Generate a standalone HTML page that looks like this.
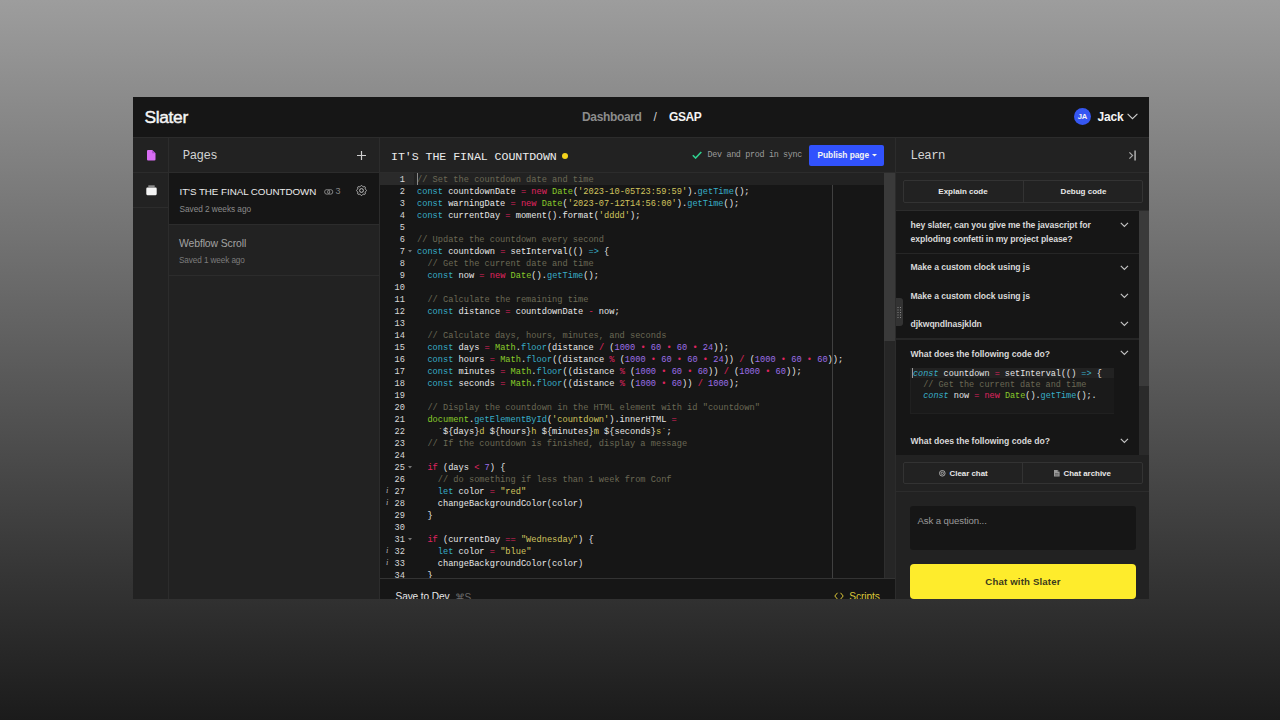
<!DOCTYPE html>
<html><head><meta charset="utf-8">
<style>
*{box-sizing:border-box;margin:0;padding:0}
html,body{width:1280px;height:720px;overflow:hidden}
body{background:linear-gradient(to bottom,#9d9d9d 0%,#1b1b1b 100%);font-family:"Liberation Sans",sans-serif;position:relative}
.a{position:absolute}
.t{white-space:pre;line-height:1}
#win{left:133px;top:97px;width:1016px;height:502px;background:#222;overflow:hidden}
#code{left:284px;font-family:"Liberation Mono",monospace;font-size:8.667px;line-height:12px;color:#e8e8e8;white-space:pre}
.ln{left:247px;width:25px;text-align:right;font-family:"Liberation Mono",monospace;font-size:8.667px;line-height:12px;color:#d8d8d8;white-space:pre}
.c{color:#6b6955}
.k{color:#38aec8}
.it{font-style:italic}
.o{color:#e02460}
.g{color:#88cb2a}
.s{color:#d2c45e}
.f{color:#38aec8}
.n{color:#9d6fe8}
</style></head><body>
<div id="win" class="a">
<div class="a" style="left:0px;top:0px;width:1016px;height:40px;background:#161616;"></div>
<div class="a" style="left:0px;top:40px;width:1016px;height:1px;background:#2c2c2c;"></div>
<div class="a t" style="left:11.50px;top:12.26px;font-family:'Liberation Sans',sans-serif;font-size:17.4px;color:#f4f4f4;letter-spacing:-0.35px;-webkit-text-stroke:0.45px #f4f4f4;">Slater</div>
<div class="a t" style="left:449.00px;top:13.84px;font-family:'Liberation Sans',sans-serif;font-size:12px;color:#8c8c8c;font-weight:bold;letter-spacing:-0.35px;">Dashboard</div>
<div class="a t" style="left:520.50px;top:13.84px;font-family:'Liberation Sans',sans-serif;font-size:12px;color:#cfcfcf;">/</div>
<div class="a t" style="left:536.00px;top:13.84px;font-family:'Liberation Sans',sans-serif;font-size:12px;color:#f4f4f4;font-weight:bold;letter-spacing:-0.45px;">GSAP</div>
<div class="a" style="left:941px;top:11px;width:17px;height:17px;background:#3657f2;border-radius:50%;"></div>
<div class="a t" style="left:941.00px;top:16.06px;font-family:'Liberation Sans',sans-serif;font-size:7.6px;color:#f4f4f4;font-weight:bold;width:17px;text-align:center;">JA</div>
<div class="a t" style="left:964.50px;top:13.84px;font-family:'Liberation Sans',sans-serif;font-size:12px;color:#f4f4f4;font-weight:bold;letter-spacing:-0.15px;">Jack</div>
<svg class="a" style="left:994px;top:16px" width="11" height="7" viewBox="0 0 11 7"><path d="M0.6 0.8 L5.5 5.7 L10.4 0.8" fill="none" stroke="#d0d0d0" stroke-width="1.05"/></svg>
<div class="a" style="left:35px;top:41px;width:1px;height:461px;background:#2c2c2c;"></div>
<div class="a" style="left:0px;top:75px;width:35px;height:1px;background:#2c2c2c;"></div>
<div class="a" style="left:0px;top:110px;width:35px;height:1px;background:#2c2c2c;"></div>
<svg class="a" style="left:14px;top:53px" width="8.5" height="10.5" viewBox="0 0 8.5 10.5"><path d="M1.1 0 H5.2 L8.5 3.3 V9.4 Q8.5 10.5 7.4 10.5 H1.1 Q0 10.5 0 9.4 V1.1 Q0 0 1.1 0Z" fill="#d86df3"/><path d="M5.2 0 V3.3 H8.5" fill="#a94fc8"/></svg>
<svg class="a" style="left:12.5px;top:88px" width="11" height="10.5" viewBox="0 0 11 10.5"><path d="M2.3 0.3 H8.7 V2.3 H2.3Z" fill="#8a8a8a"/><rect x="0.3" y="2.6" width="10.4" height="7.6" rx="1.1" fill="#f4f4f4"/></svg>
<div class="a t" style="left:49.80px;top:52.58px;font-family:'Liberation Mono',monospace;font-size:12.3px;color:#d2d2d2;letter-spacing:-0.5px;">Pages</div>
<svg class="a" style="left:223px;top:53px" width="11" height="11" viewBox="0 0 11 11"><path d="M5.5 1V10M1 5.5H10" stroke="#cfcfcf" stroke-width="1.2"/></svg>
<div class="a" style="left:36px;top:75px;width:210px;height:1px;background:#2c2c2c;"></div>
<div class="a" style="left:36px;top:76px;width:210px;height:51px;background:#161616;"></div>
<div class="a t" style="left:46.50px;top:89.70px;font-family:'Liberation Sans',sans-serif;font-size:9.8px;color:#ececec;letter-spacing:-0.05px;">IT'S THE FINAL COUNTDOWN</div>
<svg class="a" style="left:191px;top:92px" width="10" height="6" viewBox="0 0 10 6"><rect x="0.6" y="0.6" width="5.2" height="4.6" rx="2.3" fill="none" stroke="#858585" stroke-width="1"/><rect x="3.6" y="0.6" width="5.2" height="4.6" rx="2.3" fill="none" stroke="#858585" stroke-width="1"/></svg>
<div class="a t" style="left:202.60px;top:89.78px;font-family:'Liberation Sans',sans-serif;font-size:9px;color:#858585;">3</div>
<svg class="a" style="left:222.5px;top:88px" width="11" height="11" viewBox="0 0 11 11"><path d="M5.50 0.40 L5.70 0.43 L5.89 0.52 L6.07 0.66 L6.24 0.84 L6.39 1.04 L6.52 1.24 L6.65 1.43 L6.77 1.60 L6.89 1.72 L7.03 1.80 L7.19 1.84 L7.36 1.84 L7.57 1.81 L7.79 1.77 L8.03 1.72 L8.27 1.68 L8.52 1.67 L8.74 1.70 L8.94 1.77 L9.11 1.89 L9.23 2.06 L9.30 2.26 L9.33 2.48 L9.32 2.73 L9.28 2.97 L9.23 3.21 L9.19 3.43 L9.16 3.64 L9.16 3.81 L9.20 3.97 L9.28 4.11 L9.40 4.23 L9.57 4.35 L9.76 4.48 L9.96 4.61 L10.16 4.76 L10.34 4.93 L10.48 5.11 L10.57 5.30 L10.60 5.50 L10.57 5.70 L10.48 5.89 L10.34 6.07 L10.16 6.24 L9.96 6.39 L9.76 6.52 L9.57 6.65 L9.40 6.77 L9.28 6.89 L9.20 7.03 L9.16 7.19 L9.16 7.36 L9.19 7.57 L9.23 7.79 L9.28 8.03 L9.32 8.27 L9.33 8.52 L9.30 8.74 L9.23 8.94 L9.11 9.11 L8.94 9.23 L8.74 9.30 L8.52 9.33 L8.27 9.32 L8.03 9.28 L7.79 9.23 L7.57 9.19 L7.36 9.16 L7.19 9.16 L7.03 9.20 L6.89 9.28 L6.77 9.40 L6.65 9.57 L6.52 9.76 L6.39 9.96 L6.24 10.16 L6.07 10.34 L5.89 10.48 L5.70 10.57 L5.50 10.60 L5.30 10.57 L5.11 10.48 L4.93 10.34 L4.76 10.16 L4.61 9.96 L4.48 9.76 L4.35 9.57 L4.23 9.40 L4.11 9.28 L3.97 9.20 L3.81 9.16 L3.64 9.16 L3.43 9.19 L3.21 9.23 L2.97 9.28 L2.73 9.32 L2.48 9.33 L2.26 9.30 L2.06 9.23 L1.89 9.11 L1.77 8.94 L1.70 8.74 L1.67 8.52 L1.68 8.27 L1.72 8.03 L1.77 7.79 L1.81 7.57 L1.84 7.36 L1.84 7.19 L1.80 7.03 L1.72 6.89 L1.60 6.77 L1.43 6.65 L1.24 6.52 L1.04 6.39 L0.84 6.24 L0.66 6.07 L0.52 5.89 L0.43 5.70 L0.40 5.50 L0.43 5.30 L0.52 5.11 L0.66 4.93 L0.84 4.76 L1.04 4.61 L1.24 4.48 L1.43 4.35 L1.60 4.23 L1.72 4.11 L1.80 3.97 L1.84 3.81 L1.84 3.64 L1.81 3.43 L1.77 3.21 L1.72 2.97 L1.68 2.73 L1.67 2.48 L1.70 2.26 L1.77 2.06 L1.89 1.89 L2.06 1.77 L2.26 1.70 L2.48 1.67 L2.73 1.68 L2.97 1.72 L3.21 1.77 L3.43 1.81 L3.64 1.84 L3.81 1.84 L3.97 1.80 L4.11 1.72 L4.23 1.60 L4.35 1.43 L4.48 1.24 L4.61 1.04 L4.76 0.84 L4.93 0.66 L5.11 0.52 L5.30 0.43 L5.50 0.40Z" fill="none" stroke="#c8c8c8" stroke-width="0.95"/><circle cx="5.5" cy="5.5" r="1.9" fill="none" stroke="#c8c8c8" stroke-width="0.95"/></svg>
<div class="a t" style="left:46.50px;top:107.97px;font-family:'Liberation Sans',sans-serif;font-size:8.3px;color:#8a8a8a;letter-spacing:-0.05px;">Saved 2 weeks ago</div>
<div class="a" style="left:36px;top:127px;width:210px;height:1px;background:#2c2c2c;"></div>
<div class="a t" style="left:46.00px;top:142.19px;font-family:'Liberation Sans',sans-serif;font-size:10.4px;color:#a3a3a3;letter-spacing:-0.1px;">Webflow Scroll</div>
<div class="a t" style="left:46.00px;top:160.05px;font-family:'Liberation Sans',sans-serif;font-size:8.2px;color:#7c7c7c;letter-spacing:-0.1px;">Saved 1 week ago</div>
<div class="a" style="left:36px;top:178px;width:210px;height:1px;background:#2c2c2c;"></div>
<div class="a" style="left:246px;top:41px;width:1px;height:461px;background:#2c2c2c;"></div>
<div class="a t" style="left:258.00px;top:54.11px;font-family:'Liberation Mono',monospace;font-size:11.6px;color:#ececec;letter-spacing:-0.05px;">IT'S THE FINAL COUNTDOWN</div>
<div class="a" style="left:429px;top:56px;width:6px;height:6px;background:#f5d31c;border-radius:50%;"></div>
<svg class="a" style="left:559px;top:54px" width="10" height="8" viewBox="0 0 10 8"><path d="M0.8 4.2 L3.6 7 L9.3 1" fill="none" stroke="#2fd08f" stroke-width="1.6"/></svg>
<div class="a t" style="left:574.50px;top:54.37px;font-family:'Liberation Mono',monospace;font-size:8.4px;color:#9c9c9c;letter-spacing:-0.3px;">Dev and prod in sync</div>
<div class="a" style="left:676px;top:48px;width:75px;height:21px;background:#3152fd;border-radius:2px;"></div>
<div class="a t" style="left:684.50px;top:53.89px;font-family:'Liberation Sans',sans-serif;font-size:8.4px;color:#f4f4f4;font-weight:bold;letter-spacing:-0.05px;">Publish page</div>
<svg class="a" style="left:739px;top:57px" width="5" height="3" viewBox="0 0 5 3"><path d="M0 0H5L2.5 2.6Z" fill="#f4f4f4"/></svg>
<div class="a" style="left:247px;top:75px;width:516px;height:1px;background:#2c2c2c;"></div>
<div class="a" style="left:247px;top:76px;width:504px;height:406px;background:#161616;"></div>
<div class="a" style="left:247px;top:76px;width:504px;height:12px;background:#222222;"></div>
<div class="a" style="left:247px;top:76px;width:34px;height:12px;background:#2a2a2a;"></div>
<div class="a" style="left:699px;top:88px;width:1px;height:394px;background:#404040;"></div>
<div class="a" style="left:751px;top:76px;width:12px;height:406px;background:#262626;"></div>
<div class="a" style="left:751px;top:76px;width:12px;height:168px;background:#3a3a3a;"></div>
<div class="a" style="left:751px;top:244px;width:1px;height:238px;background:#2e2e2e;"></div>
<div class="a ln" style="top:77px"><div>1</div><div>2</div><div>3</div><div>4</div><div>5</div><div>6</div><div>7</div><div>8</div><div>9</div><div>10</div><div>11</div><div>12</div><div>13</div><div>14</div><div>15</div><div>16</div><div>17</div><div>18</div><div>19</div><div>20</div><div>21</div><div>22</div><div>23</div><div>24</div><div>25</div><div>26</div><div>27</div><div>28</div><div>29</div><div>30</div><div>31</div><div>32</div><div>33</div><div>34</div></div>
<div class="a" id="code" style="top:77px"><div><span class="c">// Set the countdown date and time</span></div><div><span class="k">const</span> countdownDate <span class="o">=</span> <span class="o">new</span> <span class="g">Date</span>(<span class="s">'2023-10-05T23:59:59'</span>).<span class="f">getTime</span>();</div><div><span class="k">const</span> warningDate <span class="o">=</span> <span class="o">new</span> <span class="g">Date</span>(<span class="s">'2023-07-12T14:56:00'</span>).<span class="f">getTime</span>();</div><div><span class="k">const</span> currentDay <span class="o">=</span> moment().format(<span class="s">'dddd'</span>);</div><div> </div><div><span class="c">// Update the countdown every second</span></div><div><span class="k">const</span> countdown <span class="o">=</span> setInterval(() <span class="f">=&gt;</span> {</div><div>  <span class="c">// Get the current date and time</span></div><div>  <span class="k">const</span> now <span class="o">=</span> <span class="o">new</span> <span class="g">Date</span>().<span class="f">getTime</span>();</div><div> </div><div>  <span class="c">// Calculate the remaining time</span></div><div>  <span class="k">const</span> distance <span class="o">=</span> countdownDate <span class="o">-</span> now;</div><div> </div><div>  <span class="c">// Calculate days, hours, minutes, and seconds</span></div><div>  <span class="k">const</span> days <span class="o">=</span> <span class="g">Math</span>.<span class="f">floor</span>(distance <span class="o">/</span> (<span class="n">1000</span> <span class="o">•</span> <span class="n">60</span> <span class="o">•</span> <span class="n">60</span> <span class="o">•</span> <span class="n">24</span>));</div><div>  <span class="k">const</span> hours <span class="o">=</span> <span class="g">Math</span>.<span class="f">floor</span>((distance <span class="o">%</span> (<span class="n">1000</span> <span class="o">•</span> <span class="n">60</span> <span class="o">•</span> <span class="n">60</span> <span class="o">•</span> <span class="n">24</span>)) <span class="o">/</span> (<span class="n">1000</span> <span class="o">•</span> <span class="n">60</span> <span class="o">•</span> <span class="n">60</span>));</div><div>  <span class="k">const</span> minutes <span class="o">=</span> <span class="g">Math</span>.<span class="f">floor</span>((distance <span class="o">%</span> (<span class="n">1000</span> <span class="o">•</span> <span class="n">60</span> <span class="o">•</span> <span class="n">60</span>)) <span class="o">/</span> (<span class="n">1000</span> <span class="o">•</span> <span class="n">60</span>));</div><div>  <span class="k">const</span> seconds <span class="o">=</span> <span class="g">Math</span>.<span class="f">floor</span>((distance <span class="o">%</span> (<span class="n">1000</span> <span class="o">•</span> <span class="n">60</span>)) <span class="o">/</span> <span class="n">1000</span>);</div><div> </div><div>  <span class="c">// Display the countdown in the HTML element with id "countdown"</span></div><div>  <span class="g">document</span>.<span class="f">getElementById</span>(<span class="s">'countdown'</span>).innerHTML <span class="o">=</span></div><div>    <span class="s">`</span>${days}<span class="s">d </span>${hours}<span class="s">h </span>${minutes}<span class="s">m </span>${seconds}<span class="s">s`</span>;</div><div>  <span class="c">// If the countdown is finished, display a message</span></div><div> </div><div>  <span class="o">if</span> (days <span class="o">&lt;</span> <span class="n">7</span>) {</div><div>    <span class="c">// do something if less than 1 week from Conf</span></div><div>    <span class="k">let</span> color <span class="o">=</span> <span class="s">"red"</span></div><div>    changeBackgroundColor(color)</div><div>  }</div><div> </div><div>  <span class="o">if</span> (currentDay <span class="o">==</span> <span class="s">"Wednesday"</span>) {</div><div>    <span class="k">let</span> color <span class="o">=</span> <span class="s">"blue"</span></div><div>    changeBackgroundColor(color)</div><div>  }</div></div>
<div class="a" style="left:284px;top:76px;width:1px;height:12px;background:#8a8a8a;"></div>
<svg class="a" style="left:275px;top:153px" width="4" height="3" viewBox="0 0 4 3"><path d="M0 0H4L2 2.5Z" fill="#777"/></svg>
<svg class="a" style="left:275px;top:369px" width="4" height="3" viewBox="0 0 4 3"><path d="M0 0H4L2 2.5Z" fill="#777"/></svg>
<svg class="a" style="left:275px;top:441px" width="4" height="3" viewBox="0 0 4 3"><path d="M0 0H4L2 2.5Z" fill="#777"/></svg>
<div class="a t" style="left:253.00px;top:389.30px;font-family:'Liberation Sans',sans-serif;font-size:8.5px;color:#b0b0b0;font-style:italic;font-family:'Liberation Serif',serif;">i</div>
<div class="a t" style="left:253.00px;top:401.30px;font-family:'Liberation Sans',sans-serif;font-size:8.5px;color:#b0b0b0;font-style:italic;font-family:'Liberation Serif',serif;">i</div>
<div class="a t" style="left:253.00px;top:449.30px;font-family:'Liberation Sans',sans-serif;font-size:8.5px;color:#b0b0b0;font-style:italic;font-family:'Liberation Serif',serif;">i</div>
<div class="a t" style="left:253.00px;top:461.30px;font-family:'Liberation Sans',sans-serif;font-size:8.5px;color:#b0b0b0;font-style:italic;font-family:'Liberation Serif',serif;">i</div>
<div class="a" style="left:247px;top:481px;width:516px;height:1px;background:#333333;"></div>
<div class="a" style="left:247px;top:482px;width:516px;height:20px;background:#161616;"></div>
<div class="a t" style="left:262.50px;top:495.45px;font-family:'Liberation Sans',sans-serif;font-size:10.1px;color:#e8e8e8;letter-spacing:-0.1px;">Save to Dev</div>
<div class="a t" style="left:321.50px;top:495.53px;font-family:'Liberation Sans',sans-serif;font-size:10px;color:#6a6a6a;">⌘S</div>
<svg class="a" style="left:701px;top:495px" width="10" height="8" viewBox="0 0 10 8"><path d="M3.5 0.8 L0.8 4 L3.5 7.2 M6.5 0.8 L9.2 4 L6.5 7.2" fill="none" stroke="#dcc83a" stroke-width="1"/></svg>
<div class="a t" style="left:716.30px;top:495.36px;font-family:'Liberation Sans',sans-serif;font-size:10.2px;color:#dcc83a;letter-spacing:-0.1px;">Scripts</div>
<div class="a" style="left:762px;top:41px;width:1px;height:461px;background:#2c2c2c;"></div>
<div class="a t" style="left:777.50px;top:52.58px;font-family:'Liberation Mono',monospace;font-size:12.3px;color:#d6d6d6;letter-spacing:-0.5px;">Learn</div>
<svg class="a" style="left:995px;top:53px" width="9" height="11" viewBox="0 0 9 11"><path d="M1.4 2.3 L4.6 5.5 L1.4 8.7" fill="none" stroke="#a8a8a8" stroke-width="1.2"/><path d="M7.1 0.5 V10.5" stroke="#a0a0a0" stroke-width="1.7"/></svg>
<div class="a" style="left:763px;top:75px;width:253px;height:1px;background:#2c2c2c;"></div>
<div class="a" style="left:770px;top:83px;width:240px;height:23px;background:transparent;border:1px solid #333;border-radius:2px;"></div>
<div class="a" style="left:890px;top:84px;width:1px;height:21px;background:#333;"></div>
<div class="a t" style="left:770.00px;top:90.72px;font-family:'Liberation Sans',sans-serif;font-size:8px;color:#e8e8e8;font-weight:bold;width:120px;text-align:center;">Explain code</div>
<div class="a t" style="left:891.00px;top:90.72px;font-family:'Liberation Sans',sans-serif;font-size:8px;color:#e8e8e8;font-weight:bold;width:119px;text-align:center;">Debug code</div>
<div class="a" style="left:763px;top:113px;width:253px;height:1px;background:#2c2c2c;"></div>
<div class="a" style="left:763px;top:114px;width:243px;height:244px;background:#161616;"></div>
<div class="a" style="left:1006px;top:114px;width:10px;height:244px;background:#2a2a2a;"></div>
<div class="a" style="left:1006px;top:114px;width:10px;height:175px;background:#3a3a3a;"></div>
<div class="a t" style="left:777.50px;top:124.13px;font-family:'Liberation Sans',sans-serif;font-size:8.7px;color:#d9d9d9;font-weight:bold;letter-spacing:-0.1px;">hey slater, can you give me the javascript for</div>
<div class="a t" style="left:777.50px;top:138.13px;font-family:'Liberation Sans',sans-serif;font-size:8.7px;color:#d9d9d9;font-weight:bold;letter-spacing:-0.1px;">exploding confetti in my project please?</div>
<div class="a" style="left:763px;top:156px;width:243px;height:1px;background:#262626;"></div>
<div class="a t" style="left:777.50px;top:166.32px;font-family:'Liberation Sans',sans-serif;font-size:8.6px;color:#d9d9d9;font-weight:bold;letter-spacing:-0.05px;">Make a custom clock using js</div>
<div class="a t" style="left:777.50px;top:194.52px;font-family:'Liberation Sans',sans-serif;font-size:8.6px;color:#d9d9d9;font-weight:bold;letter-spacing:-0.05px;">Make a custom clock using js</div>
<div class="a t" style="left:777.50px;top:222.72px;font-family:'Liberation Sans',sans-serif;font-size:8.6px;color:#d9d9d9;font-weight:bold;letter-spacing:-0.05px;">djkwqndlnasjkldn</div>
<div class="a" style="left:763px;top:241px;width:243px;height:2px;background:#262626;"></div>
<div class="a t" style="left:777.50px;top:252.72px;font-family:'Liberation Sans',sans-serif;font-size:8.6px;color:#d9d9d9;font-weight:bold;">What does the following code do?</div>
<div class="a" style="left:777px;top:271px;width:204px;height:46px;background:#1a1a1a;border-left:1px solid #202020;border-bottom:1px solid #202020;"></div>
<div class="a" style="left:778px;top:271px;width:203px;height:10px;background:#222222;"></div>
<div class="a" style="left:779px;top:271px;width:1px;height:10px;background:#999;"></div>
<div class="a t" style="left:780px;top:272px;font-family:'Liberation Mono',monospace;font-size:8.5px;line-height:11px;color:#e6e6e6"><span class="k it">const</span> countdown <span class="o">=</span> setInterval(() <span class="f">=&gt;</span> {
  <span class="c">// Get the current date and time</span>
  <span class="k it">const</span> now <span class="o">=</span> <span class="o">new</span> <span class="g">Date</span>().<span class="f">getTime</span>();.</div>
<div class="a t" style="left:777.50px;top:339.82px;font-family:'Liberation Sans',sans-serif;font-size:8.6px;color:#d9d9d9;font-weight:bold;">What does the following code do?</div>
<svg class="a" style="left:986.5px;top:124.5px" width="9" height="6" viewBox="0 0 9 6"><path d="M0.8 0.8 L4.4 4.4 L8 0.8" fill="none" stroke="#c4c4c4" stroke-width="1.15"/></svg>
<svg class="a" style="left:986.5px;top:167.5px" width="9" height="6" viewBox="0 0 9 6"><path d="M0.8 0.8 L4.4 4.4 L8 0.8" fill="none" stroke="#c4c4c4" stroke-width="1.15"/></svg>
<svg class="a" style="left:986.5px;top:195.5px" width="9" height="6" viewBox="0 0 9 6"><path d="M0.8 0.8 L4.4 4.4 L8 0.8" fill="none" stroke="#c4c4c4" stroke-width="1.15"/></svg>
<svg class="a" style="left:986.5px;top:223.5px" width="9" height="6" viewBox="0 0 9 6"><path d="M0.8 0.8 L4.4 4.4 L8 0.8" fill="none" stroke="#c4c4c4" stroke-width="1.15"/></svg>
<svg class="a" style="left:986.5px;top:253px" width="9" height="6" viewBox="0 0 9 6"><path d="M0.8 0.8 L4.4 4.4 L8 0.8" fill="none" stroke="#c4c4c4" stroke-width="1.15"/></svg>
<svg class="a" style="left:986.5px;top:340.5px" width="9" height="6" viewBox="0 0 9 6"><path d="M0.8 0.8 L4.4 4.4 L8 0.8" fill="none" stroke="#c4c4c4" stroke-width="1.15"/></svg>
<div class="a" style="left:763px;top:201px;width:7px;height:28px;background:#333333;border-radius:0 3px 3px 0;"></div>
<svg class="a" style="left:764px;top:210px" width="5" height="11" viewBox="0 0 5 11"><g fill="#8a8a8a"><rect x="0.5" y="0" width="1" height="1"/><rect x="0.5" y="2.5" width="1" height="1"/><rect x="0.5" y="5" width="1" height="1"/><rect x="0.5" y="7.5" width="1" height="1"/><rect x="0.5" y="10" width="1" height="1"/><rect x="3" y="0" width="1" height="1"/><rect x="3" y="2.5" width="1" height="1"/><rect x="3" y="5" width="1" height="1"/><rect x="3" y="7.5" width="1" height="1"/><rect x="3" y="10" width="1" height="1"/></g></svg>
<div class="a" style="left:763px;top:358px;width:253px;height:36px;background:#222222;"></div>
<div class="a" style="left:770px;top:365px;width:240px;height:22px;background:transparent;border:1px solid #333;border-radius:2px;"></div>
<div class="a" style="left:889px;top:366px;width:1px;height:20px;background:#333;"></div>
<svg class="a" style="left:805.5px;top:372.5px" width="7" height="7" viewBox="0 0 7 7"><circle cx="3.3" cy="3.3" r="2.8" fill="none" stroke="#b8b8b8" stroke-width="0.9"/><circle cx="3.3" cy="3.3" r="1.2" fill="none" stroke="#b8b8b8" stroke-width="0.8"/></svg>
<div class="a t" style="left:816.50px;top:372.81px;font-family:'Liberation Sans',sans-serif;font-size:7.9px;color:#e8e8e8;font-weight:bold;">Clear chat</div>
<svg class="a" style="left:921px;top:372.5px" width="6" height="7" viewBox="0 0 6 7"><path d="M0 0H3.6L5.6 2V6.6H0Z" fill="#9a9a9a"/><path d="M3.6 0V2H5.6" fill="#555"/><path d="M1 3.6H4.6M1 5H4.6" stroke="#444" stroke-width="0.6"/></svg>
<div class="a t" style="left:930.50px;top:372.81px;font-family:'Liberation Sans',sans-serif;font-size:7.9px;color:#e8e8e8;font-weight:bold;">Chat archive</div>
<div class="a" style="left:763px;top:394px;width:253px;height:1px;background:#2c2c2c;"></div>
<div class="a" style="left:777px;top:409px;width:226px;height:44px;background:#161616;border-radius:3px;"></div>
<div class="a t" style="left:784.50px;top:419.37px;font-family:'Liberation Sans',sans-serif;font-size:9.6px;color:#9a9a9a;letter-spacing:-0.1px;">Ask a question...</div>
<div class="a" style="left:777px;top:467px;width:226px;height:35px;background:#feec2c;border-radius:4px;"></div>
<div class="a t" style="left:852.30px;top:480.37px;font-family:'Liberation Sans',sans-serif;font-size:9.6px;color:#3b3a1c;font-weight:bold;letter-spacing:0.18px;">Chat with Slater</div>
</div>
</body></html>
